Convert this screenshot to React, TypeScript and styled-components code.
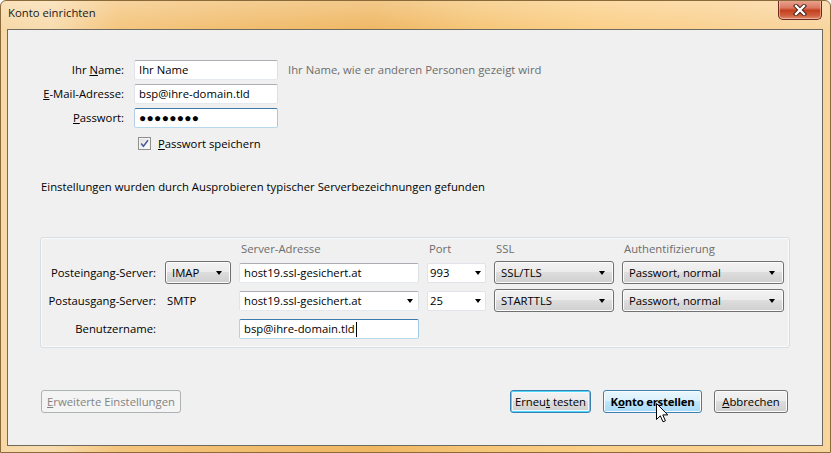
import React from "react";
import styled, { createGlobalStyle, css } from "styled-components";

const GlobalStyle = createGlobalStyle`
  html, body {
    margin: 0;
    padding: 0;
    width: 831px;
    height: 453px;
    overflow: hidden;
  }
  body {
    font-family: "Open Sans", "Noto Sans", sans-serif;
    font-size: 11.3px;
    color: #000;
  }
`;

const Window = styled.div`
  position: relative;
  width: 831px;
  height: 453px;
  box-sizing: border-box;
  display: flex;
  flex-direction: column;
  border: 1px solid #8a6a38;
  border-radius: 6px 6px 0 0;
  background:
    linear-gradient(180deg, rgba(255, 255, 255, 0.25) 0%, rgba(255, 255, 255, 0) 30px),
    linear-gradient(
      90deg,
      #f7d8a6 0%,
      #f8dcae 6%,
      #f4c57e 14%,
      #f1bd6e 30%,
      #efb763 45%,
      #f6c678 58%,
      #fbcf87 72%,
      #fad191 86%,
      #f8d59e 100%
    );
  overflow: hidden;
`;

const TitleBar = styled.div`
  height: 28px;
  display: flex;
  align-items: flex-start;
  justify-content: space-between;
  padding-left: 7px;
`;

const Title = styled.span`
  margin-top: 4px;
  line-height: 16px;
  color: #1a1a1a;
`;

const CloseButton = styled.div`
  width: 44px;
  height: 20px;
  margin-top: -1px;
  margin-right: 8px;
  box-sizing: border-box;
  border: 1px solid #6b2a1d;
  border-top: none;
  border-radius: 0 0 5px 5px;
  display: flex;
  align-items: center;
  justify-content: center;
  background: linear-gradient(180deg, #eaa795 0%, #dc7a62 40%, #c4401f 55%, #cf5b3a 80%, #e08a6c 100%);
  box-shadow: inset 0 0 0 1px rgba(255, 220, 200, 0.5);
`;

const Client = styled.div`
  flex: 1;
  margin: 0 7px 6px 6px;
  border: 1px solid #6f6a60;
  background: #f0f0f0;
  padding: 30px 34px 0 33px;
  display: flex;
  flex-direction: column;
`;

const IdentityForm = styled.div`
  display: grid;
  grid-template-columns: 83px 144px auto;
  grid-auto-rows: 20px;
  column-gap: 10px;
  row-gap: 4px;
`;

const Label = styled.label`
  line-height: 20px;
  text-align: right;
  white-space: nowrap;
`;

const Hint = styled.span`
  line-height: 20px;
  color: #6d6d6d;
  white-space: nowrap;
`;

const TextBox = styled.div<{ $focused?: boolean }>`
  height: 20px;
  box-sizing: border-box;
  background: #fff;
  border: 1px solid;
  border-color: #abadb3 #dbdfe6 #e3e9ef #e2e3ea;
  border-radius: 2px;
  padding: 0 5px 0 4px;
  line-height: 18px;
  white-space: nowrap;
  overflow: hidden;
  display: flex;
  align-items: center;
  justify-content: space-between;
  align-self: center;
  ${(p) =>
    p.$focused &&
    css`
      border-color: #3d7bad #a4c9e3 #b7d9ed #b5cfe7;
    `}
`;

const Caret = styled.span`
  display: inline-block;
  width: 1px;
  height: 15px;
  background: #000;
  vertical-align: middle;
  margin-left: 1px;
`;

const Dots = styled.span`
  font-size: 12px;
  letter-spacing: 0.3px;
`;

const CheckRow = styled.div`
  grid-column: 2 / span 2;
  height: 14px;
  margin-top: 4px;
  padding-left: 4px;
  display: flex;
  align-items: center;
  gap: 7px;
`;

const CheckBox = styled.span`
  width: 13px;
  height: 13px;
  box-sizing: border-box;
  border: 1px solid #8e8f8f;
  background: linear-gradient(135deg, #dcdcdc 0%, #f4f4f4 60%, #fff 100%);
  box-shadow: inset 0 0 0 1px #f4f4f4;
  display: flex;
  align-items: center;
  justify-content: center;
`;

const Info = styled.p`
  margin: 27px 0 0;
  line-height: 15px;
`;

const ServerGroup = styled.div`
  margin: 43px 0 0 -1px;
  align-self: flex-start;
  border: 1px solid #d5dfe5;
  border-radius: 3px;
  box-shadow: inset 0 0 0 1px #fafafa;
  padding: 4px 5px 7px 0;
  display: grid;
  grid-template-columns: 116px 66px 180px 59px 120px 162px;
  grid-template-rows: 14px repeat(3, 23px);
  column-gap: 8px;
  row-gap: 5px;
`;

const ColumnHead = styled.span`
  line-height: 14px;
  color: #6d6d6d;
  padding-left: 2px;
  white-space: nowrap;
`;

const RowLabel = styled.span`
  line-height: 23px;
  text-align: right;
  padding-right: 1px;
  white-space: nowrap;
`;

const PlainValue = styled.span`
  line-height: 23px;
  padding-left: 2px;
`;

const DropButton = styled.div`
  height: 23px;
  box-sizing: border-box;
  border: 1px solid #707070;
  border-radius: 3px;
  background: linear-gradient(180deg, #f2f2f2 0%, #ebebeb 50%, #dddddd 50%, #cfcfcf 100%);
  box-shadow: inset 0 0 0 1px #fcfcfc;
  padding: 0 8px 0 6px;
  display: flex;
  align-items: center;
  justify-content: space-between;
  white-space: nowrap;
`;

const PortBox = styled(TextBox)`
  border-color: #e2e3ea;
  padding: 0 4px 0 2px;
`;

const Arrow = styled.span`
  width: 0;
  height: 0;
  border-left: 3.5px solid transparent;
  border-right: 3.5px solid transparent;
  border-top: 4px solid #000;
  flex: none;
`;

const Footer = styled.div`
  margin-top: 42px;
  display: flex;
  justify-content: space-between;
`;

const ButtonGroup = styled.div`
  display: flex;
  gap: 12px;
`;

type ButtonState = "normal" | "focus" | "hover" | "disabled";

const Button = styled.button<{ $state?: ButtonState; $width: number }>`
  width: ${(p) => p.$width}px;
  height: 23px;
  box-sizing: border-box;
  border: 1px solid #707070;
  border-radius: 3px;
  background: linear-gradient(180deg, #f2f2f2 0%, #ebebeb 50%, #dddddd 50%, #cfcfcf 100%);
  box-shadow: inset 0 0 0 1px #fcfcfc;
  padding: 0;
  font-family: inherit;
  font-size: inherit;
  color: #000;
  white-space: nowrap;
  ${(p) =>
    p.$state === "focus" &&
    css`
      border-color: #3c7fb1;
      box-shadow: inset 0 0 0 1px #48d8fb, inset 0 0 0 2px #f2f8fc;
    `}
  ${(p) =>
    p.$state === "hover" &&
    css`
      border-color: #3c7fb1;
      background: linear-gradient(180deg, #eaf6fd 0%, #d9f0fc 50%, #bee6fd 50%, #a7d9f5 100%);
      font-weight: 700;
      letter-spacing: -0.2px;
    `}
  ${(p) =>
    p.$state === "disabled" &&
    css`
      border-color: #adb2b5;
      background: #f4f4f4;
      box-shadow: none;
      color: #838383;
    `}
`;

const Pointer = styled.svg`
  position: absolute;
  left: 655px;
  top: 402px;
`;

export default function App() {
  return (
    <>
      <GlobalStyle />
      <Window>
        <TitleBar>
          <Title>Konto einrichten</Title>
          <CloseButton>
            <svg width="14" height="12" viewBox="0 0 14 12">
              <path d="M3 2 L11 10 M11 2 L3 10" stroke="#3b1a12" strokeWidth="4.2" strokeLinecap="square" />
              <path d="M3 2 L11 10 M11 2 L3 10" stroke="#fff" strokeWidth="2.4" strokeLinecap="square" />
            </svg>
          </CloseButton>
        </TitleBar>

        <Client>
          <IdentityForm>
            <Label>
              Ihr <u>N</u>ame:
            </Label>
            <TextBox>Ihr Name</TextBox>
            <Hint>Ihr Name, wie er anderen Personen gezeigt wird</Hint>

            <Label>
              <u>E</u>-Mail-Adresse:
            </Label>
            <TextBox>bsp@ihre-domain.tld</TextBox>
            <span />

            <Label>
              <u>P</u>asswort:
            </Label>
            <TextBox $focused>
              <Dots>●●●●●●●●</Dots>
            </TextBox>
            <span />

            <CheckRow>
              <CheckBox>
                <svg width="9" height="9" viewBox="0 0 9 9">
                  <path d="M1.2 4.6 L3.4 7.2 L8 1.2" fill="none" stroke="#4a5c96" strokeWidth="1.5" />
                </svg>
              </CheckBox>
              <span>
                <u>P</u>asswort speichern
              </span>
            </CheckRow>
          </IdentityForm>

          <Info>Einstellungen wurden durch Ausprobieren typischer Serverbezeichnungen gefunden</Info>

          <ServerGroup>
            <span />
            <span />
            <ColumnHead>Server-Adresse</ColumnHead>
            <ColumnHead>Port</ColumnHead>
            <ColumnHead>SSL</ColumnHead>
            <ColumnHead>Authentifizierung</ColumnHead>

            <RowLabel>Posteingang-Server:</RowLabel>
            <DropButton>
              IMAP <Arrow />
            </DropButton>
            <TextBox>host19.ssl-gesichert.at</TextBox>
            <PortBox>
              993 <Arrow />
            </PortBox>
            <DropButton>
              SSL/TLS <Arrow />
            </DropButton>
            <DropButton>
              Passwort, normal <Arrow />
            </DropButton>

            <RowLabel>Postausgang-Server:</RowLabel>
            <PlainValue>SMTP</PlainValue>
            <TextBox>
              host19.ssl-gesichert.at <Arrow />
            </TextBox>
            <PortBox>
              25 <Arrow />
            </PortBox>
            <DropButton>
              STARTTLS <Arrow />
            </DropButton>
            <DropButton>
              Passwort, normal <Arrow />
            </DropButton>

            <RowLabel>Benutzername:</RowLabel>
            <span />
            <TextBox $focused>
              <span>
                bsp@ihre-domain.tld
                <Caret />
              </span>
            </TextBox>
          </ServerGroup>

          <Footer>
            <Button $state="disabled" $width={140}>
              <u>E</u>rweiterte Einstellungen
            </Button>
            <ButtonGroup>
              <Button $state="focus" $width={81}>
                Erneu<u>t</u> testen
              </Button>
              <Button $state="hover" $width={99}>
                K<u>o</u>nto erstellen
              </Button>
              <Button $width={74}>
                <u>A</u>bbrechen
              </Button>
            </ButtonGroup>
          </Footer>
        </Client>

        <Pointer width="13" height="20" viewBox="0 0 13 20">
          <path
            d="M0.5 0.5 L0.5 16.5 L4.3 12.8 L7 18.8 L9.4 17.8 L6.8 11.9 L11.8 11.9 Z"
            fill="#fff"
            stroke="#000"
            strokeWidth="1"
          />
        </Pointer>
      </Window>
    </>
  );
}
